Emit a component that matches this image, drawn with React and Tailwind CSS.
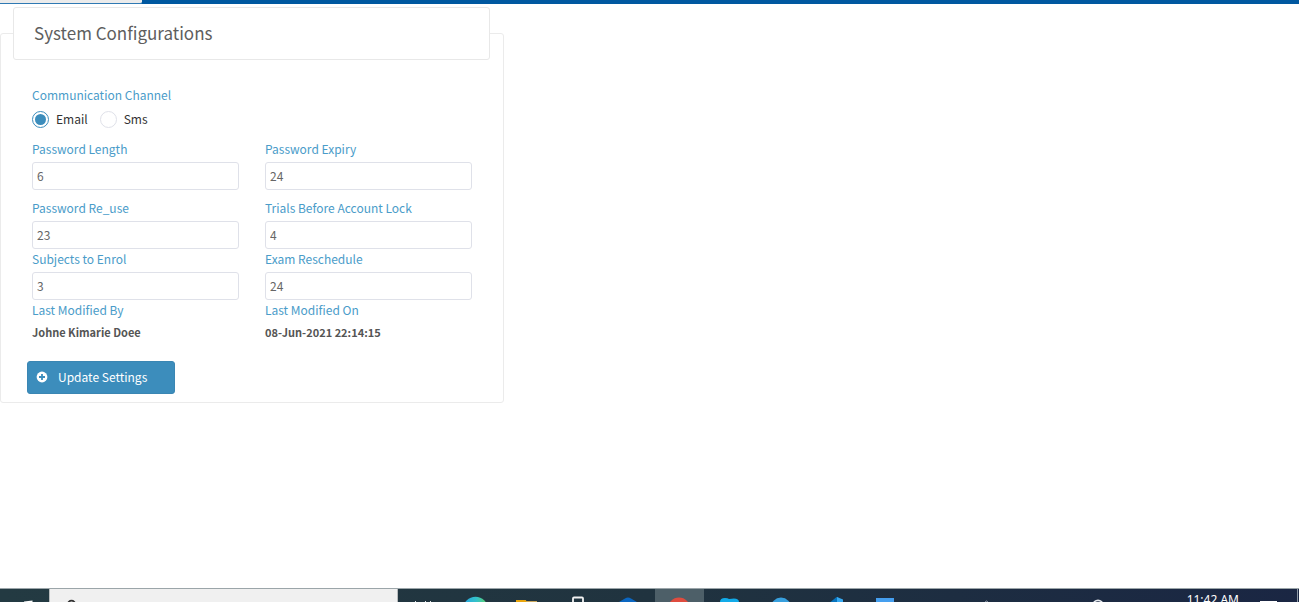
import React from "react";

const fields = [
  { id: "password-length", label: "Password Length", value: "6" },
  { id: "password-expiry", label: "Password Expiry", value: "24" },
  { id: "password-reuse", label: "Password Re_use", value: "23" },
  { id: "trials", label: "Trials Before Account Lock", value: "4" },
  { id: "subjects", label: "Subjects to Enrol", value: "3" },
  { id: "exam-reschedule", label: "Exam Reschedule", value: "24" },
];

function Field({ id, label, value }) {
  return (
    <div className="flex flex-col gap-[3px]">
      <label htmlFor={id} className="leading-5 text-[#4a9cc9]">{label}</label>
      <input
        id={id}
        type="text"
        defaultValue={value}
        className="h-7 w-full rounded-[3px] border border-[#dfe1e9] bg-white px-1 pb-[2px] text-[#666] outline-none"
      />
    </div>
  );
}

function Channel({ label, checked }) {
  return (
    <label className="flex items-center gap-[7px] text-[#333]">
      <input
        type="radio"
        name="channel"
        defaultChecked={checked}
        className="size-[17px] appearance-none rounded-full border border-[#dfe1e9] bg-white bg-clip-content p-[2px] checked:border-[#3c8dbc] checked:bg-[#3c8dbc]"
      />
      {label}
    </label>
  );
}

function PlusCircle() {
  return (
    <svg viewBox="0 0 12 12" className="size-3" aria-hidden="true">
      <circle cx="6" cy="6" r="5.4" fill="#fff" />
      <path d="M6 3v6M3 6h6" stroke="#3c8dbc" strokeWidth="1.8" />
    </svg>
  );
}

function TaskButton({ label, active, children }) {
  return (
    <button
      type="button"
      aria-label={label}
      className={active ? "w-[51px] shrink-0 border-l-2 border-transparent bg-[#4d5f68] bg-clip-padding" : "w-[51px] shrink-0"}
    >
      <svg viewBox="0 0 51 13" className={active ? "-ml-[2px] h-[13px] w-[51px]" : "h-[13px] w-[51px]"}>{children}</svg>
    </button>
  );
}

function Taskbar() {
  return (
    <footer className="flex h-[14px] overflow-hidden border-t border-[#9ba5a9] bg-linear-to-r from-[#233a42] via-[#20333f] to-[#1a2643]">
      <button type="button" aria-label="Start" className="w-[49px] shrink-0">
        <svg viewBox="0 0 49 13" className="h-[13px] w-[49px]">
          <path d="M24 12.6L32.5 11.6V13H24Z" fill="#fff" />
        </svg>
      </button>
      <button type="button" aria-label="Search" className="w-[349px] shrink-0 border-x border-[#b9bcbd] bg-[#f0f0f0]">
        <svg viewBox="0 0 347 13" className="h-[13px] w-[347px]">
          <circle cx="21.5" cy="15.5" r="3.8" fill="none" stroke="#333" strokeWidth="1.8" />
        </svg>
      </button>
      <TaskButton label="Task View">
        <path d="M17.5 12v1M27.5 12v1M32.500 12v1" stroke="#dfe4e6" />
      </TaskButton>
      <TaskButton label="Edge">
        <defs>
          <linearGradient id="edge" x1="0" x2="1">
            <stop offset="0" stopColor="#25a7e5" />
            <stop offset="0.55" stopColor="#35c2c8" />
            <stop offset="1" stopColor="#60d564" />
          </linearGradient>
        </defs>
        <circle cx="26.5" cy="20" r="12.3" fill="url(#edge)" />
      </TaskButton>
      <TaskButton label="File Explorer">
        <path d="M16 11h9.5l1 1H37v1H16Z" fill="#c9a65b" />
        <path d="M16 11h9.5l1 2H16Z" fill="#e9a50c" />
      </TaskButton>
      <TaskButton label="Store">
        <path d="M22 13V9.5q0-1 1-1h8q1 0 1 1V13" fill="none" stroke="#f2f2f2" strokeWidth="1.8" />
      </TaskButton>
      <TaskButton label="Mail">
        <path d="M17 13l6-3.500q3-2.2 6 0l6 3.500Z" fill="#0b67c2" />
      </TaskButton>
      <TaskButton label="Chrome" active>
        <circle cx="26" cy="20" r="11.4" fill="#df4c3f" />
      </TaskButton>
      <TaskButton label="Skype">
        <path d="M16 13q0-4 5-4 3 0 4 1 10-2 10 3Z" fill="#12abe9" />
      </TaskButton>
      <TaskButton label="Telegram">
        <circle cx="26" cy="19" r="10.4" fill="#38a0de" />
      </TaskButton>
      <TaskButton label="Visual Studio Code">
        <path d="M24.5 13l6-5 1.8.8V13Z" fill="#0874bd" />
        <path d="M31 8l6 2.5V13h-6Z" fill="#37aaf2" />
      </TaskButton>
      <TaskButton label="Documents">
        <path d="M19 9h18v4H19Z" fill="#459fef" />
      </TaskButton>
      <div className="ml-auto flex items-start text-white">
        <svg viewBox="0 0 120 13" className="mr-[84px] h-[13px] w-[120px]" aria-hidden="true">
          <path d="M1.5 13.5l2-1.500 2 1.500" fill="none" stroke="#9aa5b2" />
          <circle cx="115" cy="16" r="4.7" fill="none" stroke="#e6e9ee" strokeWidth="1.8" />
        </svg>
        <time className="font-['Noto_Sans',sans-serif] text-[12px] leading-[22px] whitespace-nowrap">11:42 AM</time>
        <svg viewBox="0 0 60 13" className="h-[13px] w-[60px]" aria-hidden="true">
          <path d="M21 12h17v1H21Z" fill="#fff" />
          <path d="M58.500 0v13" stroke="#8c98a5" />
        </svg>
      </div>
    </footer>
  );
}

export default function App() {
  return (
    <div className="flex min-h-screen flex-col bg-white font-['Noto_Sans_CJK_SC',sans-serif] text-[12px] leading-5">
      <header className="flex h-1 bg-[#0058a0]">
        <div className="w-[142px] rounded-br-xs border-b border-[#2f79b3] bg-[#ebebeb]" />
      </header>
      <main className="flex-1 pt-[3px]">
        <form onSubmit={(e) => e.preventDefault()}>
          <fieldset className="w-full max-w-[504px] rounded-[3px] border border-[#ebebeb] px-3 pb-2">
            <legend className="w-full max-w-[477px] rounded-[3px] border border-[#e8e8e8] bg-white px-5 pt-[11px] pb-[13px] text-[17px] leading-[27px] text-[#5e5e5e]">
              System Configurations
            </legend>
            <div className="px-[19px] pt-[25px]">
              <div role="radiogroup" aria-labelledby="channel-label">
                <div id="channel-label" className="text-[#4a9cc9]">Communication Channel</div>
                <div className="mt-1 mb-[10px] flex gap-3">
                  <Channel label="Email" checked />
                  <Channel label="Sms" />
                </div>
              </div>
              <div className="grid grid-cols-2 gap-x-[26px]">
                {fields.slice(0, 2).map((f) => <Field key={f.id} {...f} />)}
              </div>
              <div className="mt-2 grid grid-cols-2 gap-x-[26px]">
                {fields.slice(2).map((f) => <Field key={f.id} {...f} />)}
              </div>
              <dl className="grid grid-cols-2 gap-x-[26px]">
                <div className="flex flex-col gap-[2px]">
                  <dt className="text-[#4a9cc9]">Last Modified By</dt>
                  <dd className="text-[11px] font-bold text-[#555]">Johne Kimarie Doee</dd>
                </div>
                <div className="flex flex-col gap-[2px]">
                  <dt className="text-[#4a9cc9]">Last Modified On</dt>
                  <dd className="text-[11px] font-bold text-[#555]">08-Jun-2021 22:14:15</dd>
                </div>
              </dl>
            </div>
            <button
              type="submit"
              className="mt-[19px] ml-[14px] flex h-[33px] w-[148px] items-center gap-[10px] rounded-[3px] border border-[#3a86b3] bg-[#3c8dbc] px-2 pb-px text-white"
            >
              <PlusCircle />
              Update Settings
            </button>
          </fieldset>
        </form>
      </main>
      <Taskbar />
    </div>
  );
}
